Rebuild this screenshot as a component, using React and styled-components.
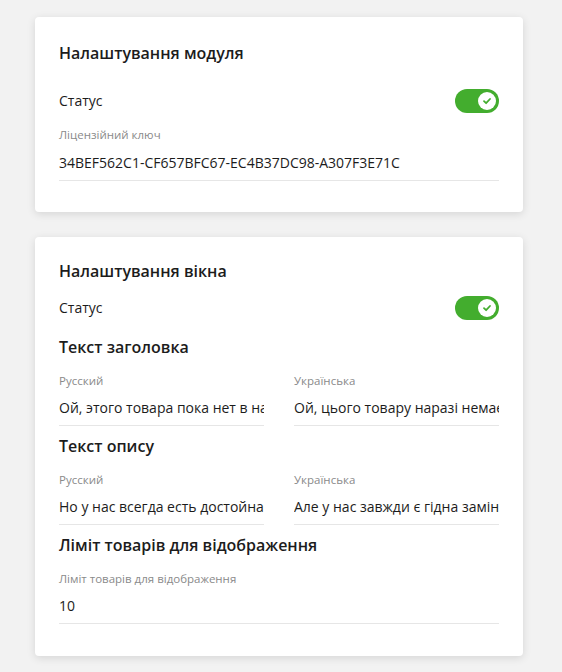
import styled, { createGlobalStyle } from "styled-components";

const GlobalStyle = createGlobalStyle`
  body {
    margin: 0;
    background: #f2f2f2;
    font-family: "Open Sans", "Noto Sans", sans-serif;
    color: #1c1c1c;
  }
`;

const Page = styled.div`
  display: flex;
  flex-direction: column;
  gap: 25px;
  padding: 17px 0 16px 35px;
`;

const Card = styled.section`
  width: 488px;
  box-sizing: border-box;
  background: #fff;
  border-radius: 4px;
  box-shadow: 0 2px 8px rgba(0, 0, 0, 0.12);
  padding: ${(p) => p.$pad};
  display: flex;
  flex-direction: column;
`;

const Title = styled.h2`
  margin: 0;
  font-size: 16px;
  font-weight: 600;
  line-height: 24px;
`;

const SubTitle = styled.h3`
  margin: ${(p) => p.$mt || 0}px 0 0;
  font-size: 16px;
  font-weight: 600;
  line-height: 24px;
`;

const StatusRow = styled.div`
  display: flex;
  align-items: center;
  justify-content: space-between;
  margin-top: ${(p) => p.$mt}px;
  font-size: 14px;
  line-height: 24px;
`;

const Toggle = styled.span`
  width: 44px;
  height: 24px;
  border-radius: 12px;
  background: #43ad2e;
  display: flex;
  align-items: center;
  justify-content: flex-end;
  padding: 0 3px;
  box-sizing: border-box;
`;

const Knob = styled.span`
  width: 18px;
  height: 18px;
  border-radius: 50%;
  background: #fff;
  display: flex;
  align-items: center;
  justify-content: center;
`;

const Field = styled.label`
  display: flex;
  flex-direction: column;
  gap: ${(p) => p.$gap ?? 1}px;
  margin-top: ${(p) => p.$mt}px;
  min-width: 0;
`;

const FieldLabel = styled.span`
  font-size: 11.5px;
  line-height: 16px;
  color: #8a8a8a;
`;

const Input = styled.input`
  font-family: inherit;
  font-size: 14px;
  color: #1c1c1c;
  height: 36px;
  padding: 0;
  border: none;
  border-bottom: 1px solid #e6e6e6;
  outline: none;
  background: transparent;
  width: 100%;
  box-sizing: border-box;
`;

const TwoCols = styled.div`
  display: grid;
  grid-template-columns: 1fr 1fr;
  column-gap: 30px;
`;

function Switch() {
  return (
    <Toggle>
      <Knob>
        <svg width="10" height="10" viewBox="0 0 10 10">
          <path d="M2 5.2 L4.1 7.2 L8 3" fill="none" stroke="#43ad2e" strokeWidth="1.8" strokeLinecap="round" strokeLinejoin="round" />
        </svg>
      </Knob>
    </Toggle>
  );
}

function LangPair({ ru, uk }) {
  return (
    <TwoCols>
      <Field $mt={14}>
        <FieldLabel>Русский</FieldLabel>
        <Input readOnly value={ru} />
      </Field>
      <Field $mt={14}>
        <FieldLabel>Українська</FieldLabel>
        <Input readOnly value={uk} />
      </Field>
    </TwoCols>
  );
}

export default function App() {
  return (
    <>
      <GlobalStyle />
      <Page>
        <Card $pad="24px 24px 31px">
          <Title>Налаштування модуля</Title>
          <StatusRow $mt={24}>
            <span>Статус</span>
            <Switch />
          </StatusRow>
          <Field $mt={14} $gap={2}>
            <FieldLabel>Ліцензійний ключ</FieldLabel>
            <Input readOnly value="34BEF562C1-CF657BFC67-EC4B37DC98-A307F3E71C" />
          </Field>
        </Card>
        <Card $pad="22px 24px 32px">
          <Title>Налаштування вікна</Title>
          <StatusRow $mt={13}>
            <span>Статус</span>
            <Switch />
          </StatusRow>
          <SubTitle $mt={15}>Текст заголовка</SubTitle>
          <LangPair
            ru="Ой, этого товара пока нет в наличии"
            uk="Ой, цього товару наразі немає в наявності"
          />
          <SubTitle $mt={8}>Текст опису</SubTitle>
          <LangPair
            ru="Но у нас всегда есть достойная замена"
            uk="Але у нас завжди є гідна заміна"
          />
          <SubTitle $mt={8}>Ліміт товарів для відображення</SubTitle>
          <Field $mt={14}>
            <FieldLabel>Ліміт товарів для відображення</FieldLabel>
            <Input readOnly value="10" />
          </Field>
        </Card>
      </Page>
    </>
  );
}
